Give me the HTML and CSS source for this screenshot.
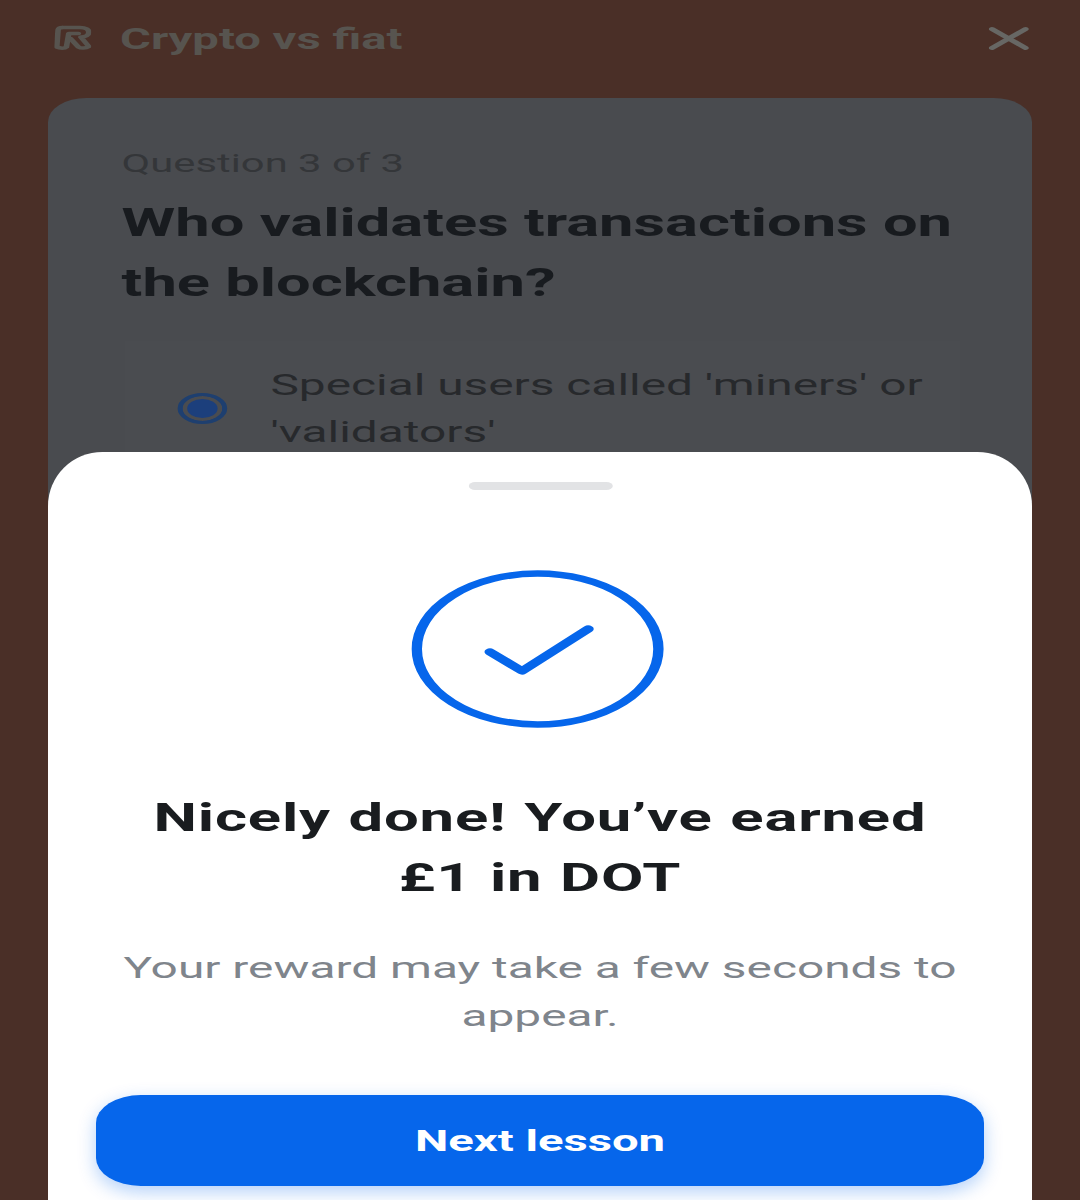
FILE: index.html
```html
<!DOCTYPE html>
<html lang="en">
<head>
  <meta charset="UTF-8">
  <meta name="viewport" content="width=device-width, initial-scale=1.0">
  <title>Crypto vs fiat</title>
  <link rel="stylesheet" href="styles.css">
</head>
<body>
  <div class="screen">
    <div class="top-bar">
      <svg class="logo" width="23" height="26" viewBox="0 0 23 26" fill="none" stroke="currentColor" stroke-width="3.500" stroke-linecap="round" stroke-linejoin="round">
        <path d="M5 2.500h11c3.500 0 5.500 2 5.500 4.800s-2 4.700-5 4.700l5 9.500c-2 2-5 2-6.500.5l-5-8.500"></path>
        <path d="M5 2.500C3 2.500 2.500 3.500 2.300 5L1.500 22c2 1.500 5 1.500 6 0l1.500-13.500h6"></path>
      </svg>
      <span class="top-title">Crypto vs fiat</span>
      <svg class="close" width="25" height="25" viewBox="0 0 25 25" fill="none" stroke="currentColor" stroke-width="4" stroke-linecap="round">
        <line x1="2" y1="3" x2="23" y2="22"></line>
        <line x1="23" y1="3" x2="2" y2="22"></line>
      </svg>
    </div>

    <div class="quiz-card">
      <div class="quiz-count">Question 3 of 3</div>
      <h2 class="quiz-question">Who validates transactions on the blockchain?</h2>
      <div class="option">
        <span class="radio"></span>
        <span class="option-text">Special users called 'miners' or 'validators'</span>
      </div>
    </div>

    <div class="sheet">
      <div class="sheet-handle"></div>
      <svg class="check" width="158" height="158" viewBox="0 0 158 158" fill="none" stroke="#0666eb" stroke-linecap="round" stroke-linejoin="round">
        <circle cx="79" cy="79" r="75.500" stroke-width="6.500"></circle>
        <path d="M49.300 82l20 19 41.300-42" stroke-width="7"></path>
      </svg>
      <h1 class="sheet-title">Nicely done! You’ve earned<br>£1 in DOT</h1>
      <p class="sheet-text">Your reward may take a few seconds to appear.</p>
      <button class="next-button">Next lesson</button>
    </div>
  </div>
</body>
</html>
```

FILE: styles.css
```css
* {
  margin: 0;
  padding: 0;
  box-sizing: border-box;
}

html, body {
  height: 100%;
  overflow: hidden;
  background-color: #4a2f27;
}

body {
  font-family: 'Roboto', sans-serif;
}

/* the whole capture is stretched sideways, so lay out at 675 wide and widen */
.screen {
  position: relative;
  width: 675px;
  height: 1200px;
  padding: 0 30px;
  overflow: hidden;
  transform: scaleX(1.6);
  transform-origin: top left;
}

.top-bar {
  height: 98px;
  padding: 0 2px 22px 4px;
  display: flex;
  align-items: center;
  color: #57544f;
}

.logo {
  flex: none;
}

.top-title {
  margin-top: 2px;
  margin-left: 18px;
  font-size: 29.500px;
  font-weight: 700;
}

.close {
  flex: none;
  margin-left: auto;
  color: #676764;
}

.quiz-card {
  height: 600px;
  padding: 47px 45px 0 46px;
  background-color: #494b4f;
  border-radius: 24px;
}

.quiz-count {
  font-size: 26.100px;
  line-height: 36px;
  color: #343639;
}

.quiz-question {
  margin-top: 12px;
  font-size: 38.400px;
  line-height: 60px;
  font-weight: 700;
  color: #181b1f;
}

.option {
  margin-top: 28px;
  margin-left: 2px;
  padding: 20px 0 0 33px;
  display: flex;
  align-items: center;
  gap: 27px;
  background-color: #4a4c50;
}

.radio {
  flex: none;
  width: 31px;
  height: 31px;
  border: 3px solid #1e3f6f;
  border-radius: 50%;
  background-color: #1c3f7c;
  box-shadow: inset 0 0 0 3px #4a4c50;
}

.option-text {
  font-size: 29.900px;
  line-height: 47px;
  color: #27292c;
}

.sheet {
  position: absolute;
  top: 452px;
  left: 30px;
  right: 30px;
  height: 800px;
  padding: 30px 30px 0;
  display: flex;
  flex-direction: column;
  align-items: center;
  text-align: center;
  background-color: #ffffff;
  border-radius: 34px 34px 0 0 / 54px 54px 0 0;
}

.sheet-handle {
  width: 90px;
  height: 8px;
  border-radius: 4px;
  background-color: #e2e3e5;
}

.check {
  margin-top: 80px;
  margin-left: -3px;
  flex: none;
}

.sheet-title {
  margin-top: 60px;
  font-size: 38.500px;
  letter-spacing: 0.5px;
  word-spacing: 1px;
  line-height: 60px;
  font-weight: 700;
  color: #191c1f;
}

.sheet-text {
  margin-top: 36px;
  font-size: 29.900px;
  line-height: 48px;
  color: #7f858c;
}

.next-button {
  margin-top: 55px;
  width: 100%;
  height: 91px;
  flex: none;
  border: none;
  border-radius: 28px;
  background-color: #0666eb;
  color: #ffffff;
  font-family: inherit;
  font-size: 29.500px;
  font-weight: 700;
  box-shadow: 0 6px 14px rgba(6, 102, 235, 0.3);
}
```
